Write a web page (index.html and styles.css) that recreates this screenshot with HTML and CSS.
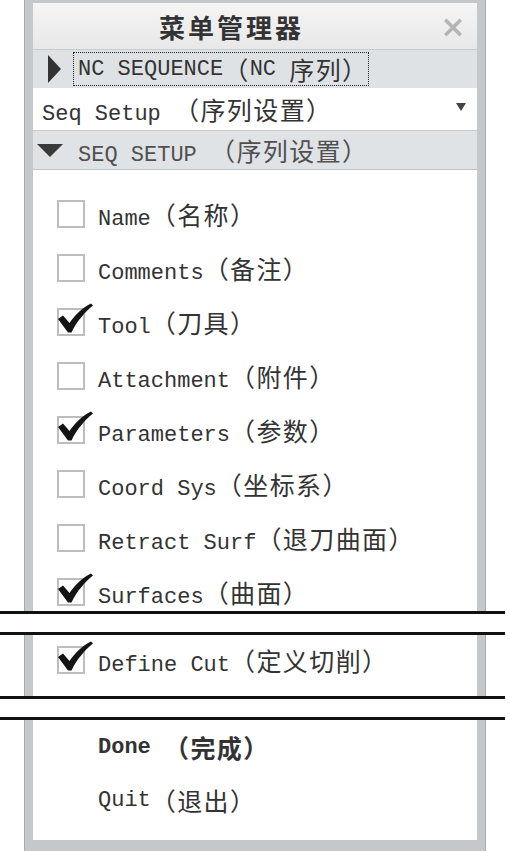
FILE: index.html
```html
<!DOCTYPE html>
<html lang="zh">
<head>
<meta charset="utf-8">
<title>菜单管理器</title>
<link rel="stylesheet" href="styles.css">
</head>
<body>
<div class="window">
  <div class="titlebar">
    <span class="title">菜单管理器</span>
    <svg class="close" viewBox="0 0 18 18" width="18" height="19"><path d="M2.5 2.5 L15.5 15.5 M15.5 2.5 L2.5 15.5" stroke="#b4b4b4" stroke-width="3.6" stroke-linecap="square"/></svg>
  </div>
  <div class="nc-row">
    <span class="tri-right"></span>
    <span class="focus">NC SEQUENCE<span class="cn">（</span>NC <span class="cn">序列）</span></span>
  </div>
  <div class="setup-row">
    <span>Seq Setup <span class="cn">（序列设置）</span></span>
    <span class="tri-small"></span>
  </div>
  <div class="seq-head">
    <span class="tri-down"></span>
    <span>SEQ SETUP <span class="cn">（序列设置）</span></span>
  </div>
  <div class="content">
    <div class="list first">
      <div class="item"><span class="box"></span><span>Name<span class="cn">（名称）</span></span></div>
      <div class="item"><span class="box"></span><span>Comments<span class="cn">（备注）</span></span></div>
      <div class="item"><span class="box"><svg class="check" viewBox="0 0 40 34"><path d="M1 16 L6 12.5 L12.5 20 C18 12 25 5 34 0.5 L36 2.5 C28 9 20 18 14.5 29.5 L11 29.5 Z"/></svg></span><span>Tool<span class="cn">（刀具）</span></span></div>
      <div class="item"><span class="box"></span><span>Attachment<span class="cn">（附件）</span></span></div>
      <div class="item"><span class="box"><svg class="check" viewBox="0 0 40 34"><path d="M1 16 L6 12.5 L12.5 20 C18 12 25 5 34 0.5 L36 2.5 C28 9 20 18 14.5 29.5 L11 29.5 Z"/></svg></span><span>Parameters<span class="cn">（参数）</span></span></div>
      <div class="item"><span class="box"></span><span>Coord Sys<span class="cn">（坐标系）</span></span></div>
      <div class="item"><span class="box"></span><span>Retract Surf<span class="cn">（退刀曲面）</span></span></div>
      <div class="item"><span class="box"><svg class="check" viewBox="0 0 40 34"><path d="M1 16 L6 12.5 L12.5 20 C18 12 25 5 34 0.5 L36 2.5 C28 9 20 18 14.5 29.5 L11 29.5 Z"/></svg></span><span>Surfaces<span class="cn">（曲面）</span></span></div>
    </div>
    <div class="break first-break"></div>
    <div class="list second">
      <div class="item"><span class="box"><svg class="check" viewBox="0 0 40 34"><path d="M1 16 L6 12.5 L12.5 20 C18 12 25 5 34 0.5 L36 2.5 C28 9 20 18 14.5 29.5 L11 29.5 Z"/></svg></span><span>Define Cut<span class="cn">（定义切削）</span></span></div>
    </div>
    <div class="break"></div>
    <div class="list third">
      <div class="item plain done">Done <span class="cn">（完成）</span></div>
      <div class="item plain">Quit<span class="cn">（退出）</span></div>
    </div>
  </div>
</div>
</body>
</html>
```

FILE: styles.css
```css
* {
  box-sizing: border-box;
}

body {
  margin: 0;
  background: #ffffff;
  font-family: "Liberation Mono", "Noto Sans CJK SC", monospace;
  font-size: 22px;
  color: #333333;
}

.cn {
  font-family: "Noto Sans CJK SC", sans-serif;
  font-size: 25px;
  letter-spacing: 1.4px;
}

.window {
  margin-left: 25px;
  width: 460px;
  height: 851px;
  border-style: solid;
  border-color: #c5c8cb;
  border-width: 3px 8px 11px 8px;
  box-shadow: -1px 0 0 #a9acaf, 1px 0 0 #a9acaf;
  display: flex;
  flex-direction: column;
}

.titlebar {
  height: 47px;
  flex: none;
  display: grid;
  grid-template-columns: 1fr auto;
  align-items: center;
  background: linear-gradient(#f5f5f5, #e8e8e8);
  border-bottom: 1px solid #c9ccd0;
}

.title {
  justify-self: center;
  padding-right: 14px;
  font-family: "Noto Sans CJK SC", sans-serif;
  font-weight: 700;
  font-size: 26px;
  letter-spacing: 3px;
  color: #333333;
}

.close {
  margin-right: 15px;
  margin-top: 2px;
}

.nc-row {
  height: 38px;
  flex: none;
  display: flex;
  align-items: center;
  gap: 12px;
  padding-left: 15px;
  background: #dfe2e5;
}

.tri-right {
  width: 0;
  height: 0;
  border-left: 13px solid #333333;
  border-top: 14px solid transparent;
  border-bottom: 14px solid transparent;
}

.focus {
  height: 34px;
  display: flex;
  align-items: center;
  padding-left: 4px;
  border: 1px dotted #222222;
  white-space: pre;
}

.setup-row {
  height: 43px;
  flex: none;
  display: flex;
  align-items: center;
  justify-content: space-between;
  padding: 0 11px 0 9px;
  background: #ffffff;
  border-bottom: 1px solid #c8cbce;
  white-space: pre;
}

.tri-small {
  width: 0;
  height: 0;
  border-top: 8px solid #444444;
  border-left: 5px solid transparent;
  border-right: 5px solid transparent;
  margin-top: -4px;
}

.seq-head {
  height: 39px;
  flex: none;
  display: flex;
  align-items: center;
  gap: 15px;
  padding-left: 4px;
  background: #e0e3e6;
  border-bottom: 1px solid #c0c3c6;
  color: #505050;
  white-space: pre;
}

.tri-down {
  width: 0;
  height: 0;
  border-top: 13px solid #3a3a3a;
  border-left: 13px solid transparent;
  border-right: 13px solid transparent;
}

.content {
  flex: 1;
  background: #ffffff;
}

.list {
  display: flex;
  flex-direction: column;
  gap: 18px;
  padding-left: 24px;
}

.list.first {
  padding-top: 26px;
}

.list.second {
  padding-top: 7px;
  padding-bottom: 18px;
}

.list.third {
  padding-top: 9px;
  padding-bottom: 22px;
  gap: 17px;
}

.item {
  height: 36px;
  display: flex;
  align-items: center;
  gap: 13px;
  white-space: pre;
}

.item.plain {
  padding-left: 41px;
  gap: 0;
}

.item.done {
  font-weight: 700;
}

.box {
  position: relative;
  flex: none;
  width: 28px;
  height: 28px;
  border: 2px solid #bdbdbd;
  background: #ffffff;
}

.check {
  position: absolute;
  left: -2px;
  top: -7px;
  width: 40px;
  height: 34px;
  fill: #141414;
}

.break {
  height: 24px;
  margin: 0 -28px 0 -33px;
  background: #ffffff;
  border-top: 3px solid #111111;
  border-bottom: 3px solid #111111;
}

.break.first-break {
  margin-top: 1px;
}
```
